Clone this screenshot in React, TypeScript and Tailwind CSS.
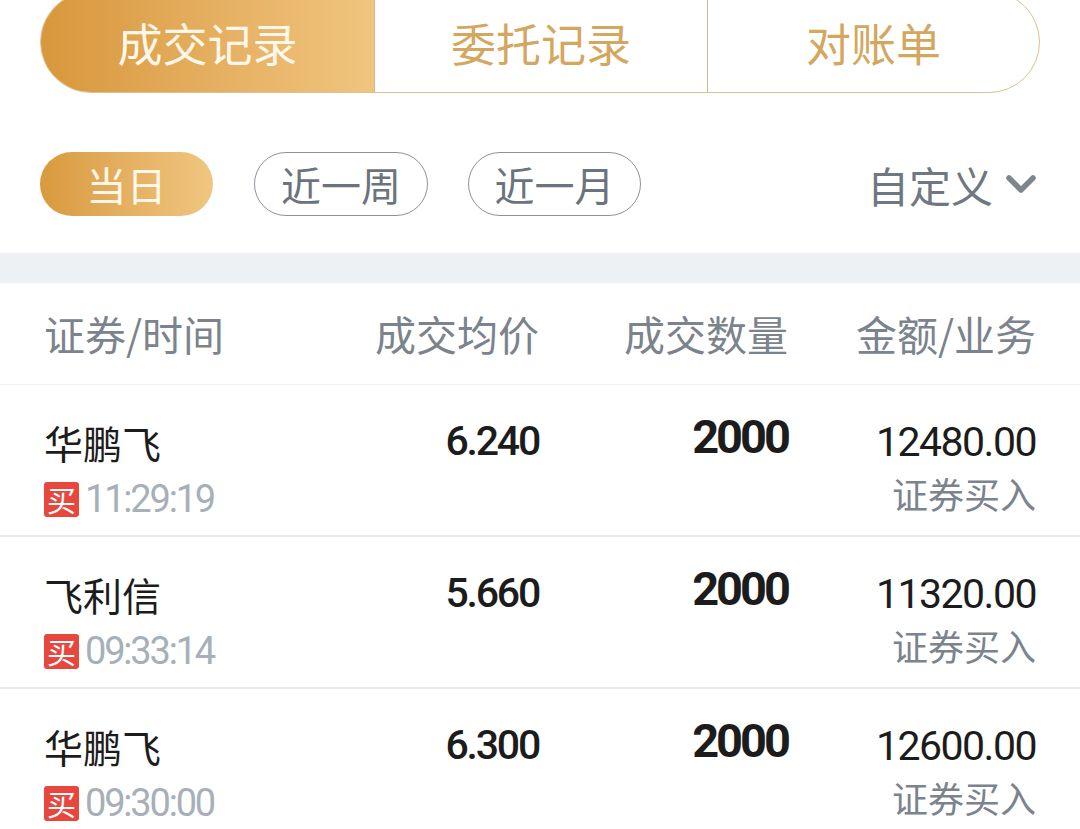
import React from 'react';

const cjk = '"Noto Sans CJK SC", "Noto Sans", sans-serif';
const num = 'Roboto, "Noto Sans CJK SC", sans-serif';

const trades = [
  { id: 1, name: '华鹏飞', time: '11:29:19', price: '6.240', qty: '2000', amount: '12480.00', biz: '证券买入' },
  { id: 2, name: '飞利信', time: '09:33:14', price: '5.660', qty: '2000', amount: '11320.00', biz: '证券买入' },
  { id: 3, name: '华鹏飞', time: '09:30:00', price: '6.300', qty: '2000', amount: '12600.00', biz: '证券买入' },
];

const ChevronDown = () => (
  <svg width="32" height="22" viewBox="0 0 32 22" fill="none">
    <path d="M4 5 L16 17 L28 5" stroke="#7d858f" strokeWidth="5.5" strokeLinecap="round" strokeLinejoin="round" />
  </svg>
);

const App = () => {
  return (
    <div className="w-[1080px] h-[829px] overflow-hidden bg-white" style={{ fontFamily: cjk }}>
      {/* main tabs */}
      <div className="mx-[40px] mt-[-9px] h-[102px] flex rounded-full border border-[#dcc191] overflow-hidden">
        <div className="w-[333px] flex items-center justify-center bg-gradient-to-r from-[#d8973b] to-[#f0c57f] text-[#fff8ea] text-[45px] pt-[2px]">
          成交记录
        </div>
        <div className="w-[333px] flex items-center justify-center border-l border-[#d6b888] text-[#d4a760] text-[45px] pt-[2px]">
          委托记录
        </div>
        <div className="flex-1 flex items-center justify-center border-l border-[#d6b888] text-[#d4a760] text-[45px] pt-[2px]">
          对账单
        </div>
      </div>

      {/* date filters */}
      <div className="flex items-center px-[40px] mt-[59px] h-[64px]">
        <div className="w-[173px] h-[64px] rounded-full flex items-center justify-center bg-gradient-to-r from-[#d99a3e] to-[#f0c680] text-[#fff8ea] text-[40px]">
          当日
        </div>
        <div className="ml-[41px] w-[174px] h-[64px] rounded-full flex items-center justify-center border border-[#8c939c] text-[#6b737d] text-[40px]">
          近一周
        </div>
        <div className="ml-[40px] w-[173px] h-[64px] rounded-full flex items-center justify-center border border-[#8c939c] text-[#6b737d] text-[40px]">
          近一月
        </div>
        <div className="ml-auto flex items-center gap-[12px] text-[#6f7781] text-[42px] mr-[3px]">
          <span>自定义</span>
          <ChevronDown />
        </div>
      </div>

      <div className="mt-[37px] h-[30px] bg-[#eef1f4]" />

      {/* header */}
      <div className="flex items-center px-[44px] h-[102px] border-b border-[#f0f1f3] text-[41px] text-[#7b838d]">
        <div className="w-[300px]">证券/时间</div>
        <div className="w-[195px] text-right">成交均价</div>
        <div className="w-[249px] text-right">成交数量</div>
        <div className="flex-1 text-right">金额/业务</div>
      </div>

      {/* rows */}
      {trades.map((t) => (
        <div key={t.id} className="flex px-[44px] h-[152px] border-b-2 border-[#e8e9eb]">
          <div className="w-[300px] pt-[35px] flex flex-col">
            <div className="h-[44px] flex items-center text-[39px] text-[#1c1c1c]">{t.name}</div>
            <div className="mt-[13px] h-[44px] flex items-center">
              <span className="w-[35px] h-[35px] rounded-[3px] bg-[#e7473d] text-white text-[29px] leading-none flex items-center justify-center">
                买
              </span>
              <span className="ml-[6px] text-[38px] text-[#a7afb9] tracking-[-2.2px]" style={{ fontFamily: num }}>
                {t.time}
              </span>
            </div>
          </div>
          <div className="w-[195px] pt-[35px]">
            <div className="h-[44px] flex items-center justify-end text-[41px] font-medium text-[#1c1c1c] tracking-[-2.2px]" style={{ fontFamily: num }}>
              {t.price}
            </div>
          </div>
          <div className="w-[249px] pt-[28px]">
            <div className="h-[48px] flex items-center justify-end text-[47px] font-bold text-[#1c1c1c] tracking-[-3px]" style={{ fontFamily: num }}>
              {t.qty}
            </div>
          </div>
          <div className="flex-1 pt-[36px] flex flex-col items-end">
            <div className="h-[44px] flex items-center text-[41px] text-[#1c1c1c] tracking-[-1.5px]" style={{ fontFamily: num }}>
              {t.amount}
            </div>
            <div className="mt-[8px] h-[40px] flex items-center text-[36px] text-[#7b838d]">{t.biz}</div>
          </div>
        </div>
      ))}
    </div>
  );
};

export default App;
